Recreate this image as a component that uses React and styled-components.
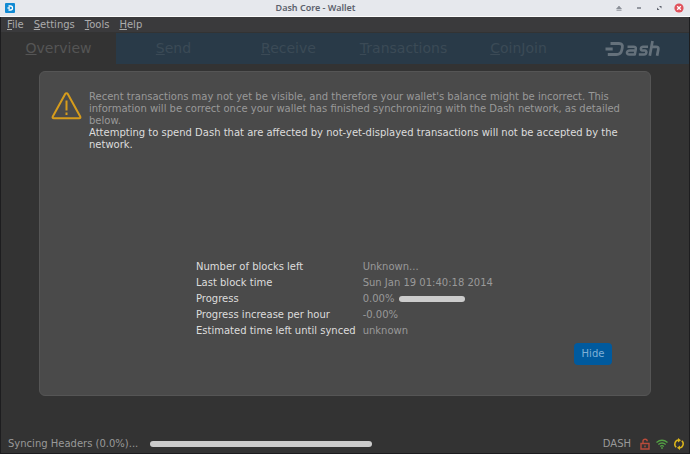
import React from "react";
import styled, { createGlobalStyle } from "styled-components";

const GlobalStyle = createGlobalStyle`
  * { box-sizing: border-box; }
  body { margin: 0; background: #333; }
  button { font: inherit; border: 0; padding: 0; background: none; color: inherit; }
`;

const Window = styled.div`
  min-height: 100vh;
  display: flex;
  flex-direction: column;
  background: #333333;
  border: solid #1d1d1f;
  border-width: 0 1px 1px;
  font: 10px/16px "DejaVu Sans", sans-serif;
  color: #999999;
`;

const TitleBar = styled.header`
  height: 17px;
  margin: 0 -1px;
  padding: 0 6px 0 5px;
  display: grid;
  grid-template-columns: 1fr auto 1fr;
  align-items: center;
  background: #e6e8ed;
  border-bottom: 1px solid #fbfbfb;
`;

const Title = styled.h1`
  margin: 0;
  padding-right: 58px;
  font: 600 9px/16px "Noto Sans", sans-serif;
  color: #5c616c;
`;

const WindowControls = styled.div`
  display: flex;
  justify-content: flex-end;
  gap: 10px;
`;

const WindowButton = styled.button`
  width: 10px;
  height: 10px;
  display: flex;
`;

const MenuBar = styled.nav`
  height: 15px;
  margin-bottom: 1px;
  padding: 0 6px;
  display: flex;
  gap: 10px;
  background: #3a3a3c;
  color: #acacac;
  line-height: 15px;
`;

const MenuButton = styled.button`
  &::first-letter { text-decoration: underline; }
`;

const Tabs = styled.nav`
  height: 31px;
  display: grid;
  grid-template-columns: repeat(5, 115fr) 113fr;
  background: #293a48;
`;

const Tab = styled.button`
  font-size: 14px;
  line-height: 31px;
  background: ${(p) => (p.$active ? "#333333" : "transparent")};
  color: ${(p) => (p.$active ? "#555555" : "#3b4a56")};
  &::first-letter { text-decoration: underline; }
`;

const Logo = styled.svg`
  width: 56px;
  height: 18px;
  place-self: center;
`;

const Content = styled.main`
  flex: 1;
  display: flex;
  padding: 7px 38px 38px;
`;

const Panel = styled.section`
  flex: 1;
  display: flex;
  flex-direction: column;
  justify-content: space-between;
  padding: 19px 11px 30px;
  background: #4a4a4a;
  border: 1px solid #555555;
  border-radius: 6px;
`;

const Notice = styled.div`
  display: flex;
  gap: 7px;
  line-height: 12px;
  p { margin: 0; }
`;

const WarningIcon = styled.svg`
  flex: none;
  width: 31px;
  height: 29px;
`;

const Strong = styled.p`
  color: #dddddd;
`;

const Details = styled.dl`
  margin: 0;
  padding-left: 145px;
  display: grid;
  grid-template-columns: auto 1fr;
  column-gap: 7px;
`;

const Label = styled.dt`
  color: #dddddd;
`;

const Value = styled.dd`
  margin: 0;
  display: flex;
  align-items: center;
  gap: 5px;
`;

const Bar = styled.div`
  width: ${(p) => p.$width};
  height: 6px;
  border-radius: 3px;
  background: #cccccc;
`;

const Actions = styled.div`
  display: flex;
  justify-content: flex-end;
  padding: 4px 27px 0 0;
`;

const HideButton = styled.button`
  && {
    width: 38px;
    height: 22px;
    border-radius: 4px;
    background: #005a9e;
    color: #7fb0d6;
  }
`;

const StatusBar = styled.footer`
  height: 19px;
  padding: 0 4px 0 7px;
  display: flex;
  align-items: center;
  svg { width: 12px; height: 12px; margin-left: 5px; }
`;

const StatusText = styled.span`
  width: 142px;
`;

const Network = styled.span`
  margin-left: auto;
  padding-right: 3px;
`;

const tabs = ["Overview", "Send", "Receive", "Transactions", "CoinJoin"];

export default function App() {
  return (
    <>
      <GlobalStyle />
      <Window>
        <TitleBar>
          <svg width="10" height="10" viewBox="0 0 10 10" aria-hidden="true">
            <rect width="10" height="10" rx="1" fill="#118ad3" />
            <path d="M3.5 3h2a2 2 0 0 1 0 4h-2M2.5 5h2.5" fill="none" stroke="#fff" strokeWidth="1.3" />
          </svg>
          <Title>Dash Core - Wallet</Title>
          <WindowControls>
            <WindowButton aria-label="Shade">
              <svg width="10" height="10" viewBox="0 0 10 10"><path d="M5 3 7.5 6h-5zM2.5 7.5h5" fill="#8b8f98" stroke="#8b8f98" strokeWidth=".7" /></svg>
            </WindowButton>
            <WindowButton aria-label="Minimize">
              <svg width="10" height="10" viewBox="0 0 10 10"><path d="M3 5h4" stroke="#5c616c" strokeWidth="1.2" /></svg>
            </WindowButton>
            <WindowButton aria-label="Maximize">
              <svg width="10" height="10" viewBox="0 0 10 10"><path d="M5 3h2.5v2.5zM3 4.5V7h2.5z" fill="#5c616c" /></svg>
            </WindowButton>
            <WindowButton aria-label="Close">
              <svg width="10" height="10" viewBox="0 0 10 10"><circle cx="5" cy="5" r="4.6" fill="#e0525c" /><path d="m3.2 3.2 3.6 3.6m0-3.6L3.2 6.8" stroke="#fff" strokeWidth="1.3" /></svg>
            </WindowButton>
          </WindowControls>
        </TitleBar>
        <MenuBar>
          {["File", "Settings", "Tools", "Help"].map((m) => <MenuButton key={m}>{m}</MenuButton>)}
        </MenuBar>
        <Tabs>
          {tabs.map((t, i) => <Tab key={t} $active={i === 0}>{t}</Tab>)}
          <Logo viewBox="0 0 56 18" role="img" aria-label="Dash">
            <g fill="none" stroke="#65717b" strokeWidth="2.8" strokeLinejoin="round">
              <path d="M5.500 3.500H14q4.200 0 3.300 4.200l-.5 2.300q-.9 4.500-5.300 4.500H2.800M.5 9h7.200" />
              <path d="M22.500 6.800h6q2.800 0 2.300 2.500l-1 5.200h-5.500q-2.700 0-2.300-2.200.4-1.900 2.800-1.900h5" strokeWidth="2.500" />
              <path d="M43 6.800h-4.800q-2 0-2.300 1.700-.3 1.900 1.500 2l2.500.1q1.800.1 1.500 2-.4 1.900-2.300 1.900h-5.300" strokeWidth="2.500" />
              <path d="M47.500 1 44.800 15.700M46.700 6.800h4.300q2.800 0 2.300 2.700l-1.200 6.200" strokeWidth="2.700" />
            </g>
          </Logo>
        </Tabs>
        <Content>
          <Panel>
            <Notice>
              <WarningIcon viewBox="0 0 31 29" aria-hidden="true">
                <path d="M15.500 2.200q.8 0 1.300.9l12.400 22.300q.8 1.700-1 1.800H2.800q-1.800-.1-1-1.800L14.200 3.100q.5-.9 1.300-.9ZM15.500 9.500v10M15.500 21.500v2.500" fill="none" stroke="#d69c1c" strokeWidth="2" />
              </WarningIcon>
              <div>
                <p>Recent transactions may not yet be visible, and therefore your wallet's balance might be incorrect. This information will be correct once your wallet has finished synchronizing with the Dash network, as detailed below.</p>
                <Strong>Attempting to spend Dash that are affected by not-yet-displayed transactions will not be accepted by the network.</Strong>
              </div>
            </Notice>
            <div>
              <Details>
                <Label>Number of blocks left</Label><Value>Unknown...</Value>
                <Label>Last block time</Label><Value>Sun Jan 19 01:40:18 2014</Value>
                <Label>Progress</Label><Value>0.00% <Bar $width="66px" role="progressbar" aria-label="Progress" /></Value>
                <Label>Progress increase per hour</Label><Value>-0.00%</Value>
                <Label>Estimated time left until synced</Label><Value>unknown</Value>
              </Details>
              <Actions><HideButton>Hide</HideButton></Actions>
            </div>
          </Panel>
        </Content>
        <StatusBar>
          <StatusText>Syncing Headers (0.0%)...</StatusText>
          <Bar $width="222px" role="progressbar" aria-label="Header sync" />
          <Network>DASH</Network>
          <svg viewBox="0 0 12 12" aria-label="Wallet unlocked"><path d="M2 5.500h8V11H2zM4 5.500V3.300q0-2 2.200-2 2 0 2 2M6 7.500v1.700" fill="none" stroke="#b94b3b" strokeWidth="1.400" /></svg>
          <svg viewBox="0 0 12 12" aria-label="Connected"><path d="M.5 4.500q5.500-4.500 11 0M2.300 6.500q3.700-3 7.400 0M4.200 8.400q1.800-1.500 3.600 0M6 9v2" fill="none" stroke="#54a144" strokeWidth="1.300" /></svg>
          <svg viewBox="0 0 12 12" aria-label="Syncing"><path d="M3.200 9.300A4.200 4.200 0 0 1 5.500 2M8.800 2.700A4.200 4.200 0 0 1 6.500 10" fill="none" stroke="#dbb51c" strokeWidth="1.500" /><path d="M5 0l3 2.200-3 2.300zM7 12l-3-2.200 3-2.300z" fill="#dbb51c" /></svg>
        </StatusBar>
      </Window>
    </>
  );
}
